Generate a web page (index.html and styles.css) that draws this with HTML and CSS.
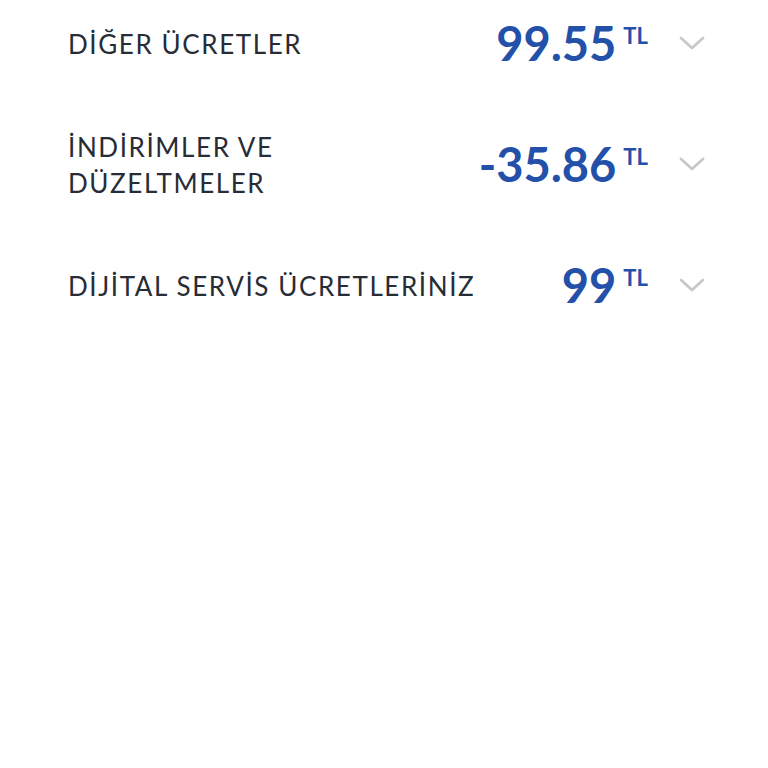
FILE: index.html
```html
<!DOCTYPE html>
<html lang="tr">
<head>
<meta charset="UTF-8">
<title>Fatura detayı</title>
<link rel="stylesheet" href="styles.css">
</head>
<body>
	<!-- fatura kalemleri -->
	<ul class="items">
		<li class="item">
			<span class="label">DİĞER ÜCRETLER</span>
			<span class="amount">99.55<sup>TL</sup></span>
			<svg class="chevron" width="26" height="14" viewBox="0 0 26 14"><path d="M2 2 L13 12 L24 2" fill="none" stroke="#c8c8ca" stroke-width="2.8" stroke-linecap="round" stroke-linejoin="round"/></svg>
		</li>
		<li class="item">
			<span class="label">İNDİRİMLER VE<br>DÜZELTMELER</span>
			<span class="amount">-35.86<sup>TL</sup></span>
			<svg class="chevron" width="26" height="14" viewBox="0 0 26 14"><path d="M2 2 L13 12 L24 2" fill="none" stroke="#c8c8ca" stroke-width="2.8" stroke-linecap="round" stroke-linejoin="round"/></svg>
		</li>
		<li class="item">
			<span class="label">DİJİTAL SERVİS ÜCRETLERİNİZ</span>
			<span class="amount">99<sup>TL</sup></span>
			<svg class="chevron" width="26" height="14" viewBox="0 0 26 14"><path d="M2 2 L13 12 L24 2" fill="none" stroke="#c8c8ca" stroke-width="2.8" stroke-linecap="round" stroke-linejoin="round"/></svg>
		</li>
	</ul>
</body>
</html>
```

FILE: styles.css
```css
body {
  margin: 0;
  background-color: #fff;
  font-family: Lato, "Noto Sans", sans-serif;
  color: #272c36;
}

/* liste ekranın üstünden kırpılmış başlıyor */
.items {
  list-style: none;
  margin: -17px 0 0;
  padding: 0 63px 0 68px;
}

.item {
  display: flex;
  align-items: center;
  height: 121px;
}

.label {
  flex: 1;
  font-size: 26px;
  line-height: 36px;
  letter-spacing: 1.6px;
}

.amount {
  font-size: 47px;
  font-weight: 700;
  color: #2350a9;
  letter-spacing: 0;
  line-height: 1;
}

.amount sup {
  font-size: 22px;
  vertical-align: 17px;
  margin-left: 7px;
}

.chevron {
  margin-left: 31px;
  margin-top: -1px;
}
```
